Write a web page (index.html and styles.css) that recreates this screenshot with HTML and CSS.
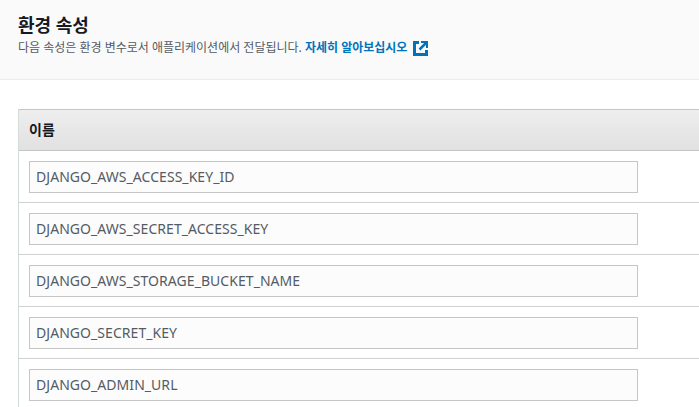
FILE: index.html
```html
<!DOCTYPE html>
<html lang="ko">
<head>
    <meta charset="UTF-8">
    <meta name="viewport" content="width=device-width, initial-scale=1.0">
    <title>환경 속성</title>
    <link rel="stylesheet" href="styles.css">
</head>
<body>
    <div class="page-header">
        <h2>환경 속성</h2>
        <p>다음 속성은 환경 변수로서 애플리케이션에서 전달됩니다. <a href="#" class="learn-more">자세히 알아보십시오
            <svg class="external-icon" width="15" height="15" viewBox="0 0 15 15" fill="none" stroke="#0073bb">
                <path d="M6 1.500H1.500V13.500H13.500V9" stroke-width="3"/>
                <path d="M8 1H14V7" stroke-width="2"/>
                <path d="M13.500 1.500L6.500 8.500" stroke-width="2.500"/>
            </svg></a></p>
    </div>

    <div class="table-wrap">
        <div class="table-head">이름</div>
        <div class="table-row"><div class="name-field">DJANGO_AWS_ACCESS_KEY_ID</div></div>
        <div class="table-row"><div class="name-field">DJANGO_AWS_SECRET_ACCESS_KEY</div></div>
        <div class="table-row"><div class="name-field">DJANGO_AWS_STORAGE_BUCKET_NAME</div></div>
        <div class="table-row"><div class="name-field">DJANGO_SECRET_KEY</div></div>
        <div class="table-row"><div class="name-field">DJANGO_ADMIN_URL</div></div>
    </div>
</body>
</html>
```

FILE: styles.css
```css
* {
    margin: 0;
    padding: 0;
    box-sizing: border-box;
    font-family: 'Noto Sans', 'Noto Sans CJK KR', sans-serif;
}

html, body {
    height: 407px;
    overflow: hidden;
}

body {
    background: #fff;
    color: #16191f;
}

.page-header {
    height: 80px;
    padding: 12px 18px 0;
    background: #fafafa;
    border-bottom: 1px solid #eaeded;
}

.page-header h2 {
    font-size: 18px;
    line-height: 27px;
    font-weight: 700;
    color: #16191f;
}

.page-header p {
    font-size: 12px;
    line-height: 18px;
    color: #545b64;
}

.learn-more {
    color: #0073bb;
    font-weight: 700;
    text-decoration: none;
}

.external-icon {
    vertical-align: -4px;
    margin-left: 2px;
}

.table-wrap {
    margin: 29px 0 0 18px;
    border-left: 1px solid #d5dbdb;
}

.table-head {
    height: 42px;
    padding-left: 10px;
    font-size: 14px;
    line-height: 40px;
    font-weight: 700;
    background: linear-gradient(#eeeeee, #e1e1e1);
    border-top: 1px solid #c6c6c6;
    border-bottom: 1px solid #c6c6c6;
}

.table-row {
    height: 52px;
    padding: 10px 10px 0;
    border-bottom: 1px solid #d0d0d0;
}

.name-field {
    width: 609px;
    height: 32px;
    padding-left: 6px;
    font-size: 14px;
    line-height: 30px;
    letter-spacing: 0.05px;
    color: #545b64;
    background: #fcfcfc;
    border: 1px solid #c6c6c6;
}
```
